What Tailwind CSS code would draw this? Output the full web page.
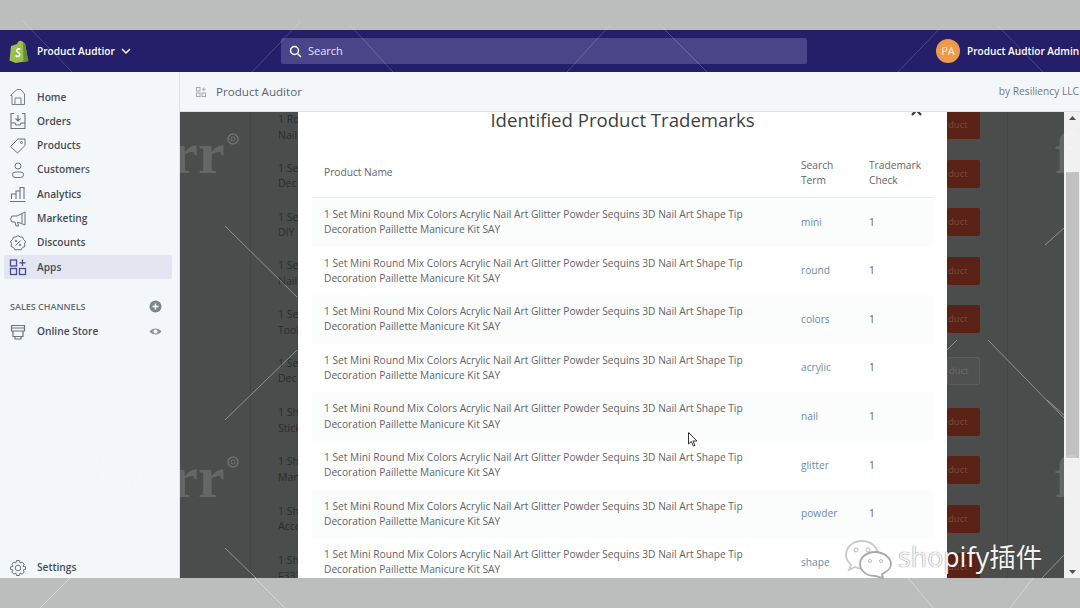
<!doctype html>
<html><head><meta charset="utf-8">
<script src="https://cdn.jsdelivr.net/npm/@tailwindcss/browser@4"></script>
</head>
<body class="relative w-[1080px] h-[608px] overflow-hidden bg-[#bcbdbd] font-['Open_Sans','Noto_Sans_CJK_SC',sans-serif] antialiased">
<div class="h-[30px]"></div>
<div class="h-[548px] flex flex-col bg-[#f4f6f8]">
  <header class="h-[42px] shrink-0 bg-[#241f68] flex items-center text-white relative">
    <div class="w-[281px] flex items-center pl-[9px] shrink-0">
      <svg width="20" height="23" viewBox="0 0 20 23"><path d="M2 6 L8 4 C9 1 11 0 12.500 1 L14 2 L16 3.500 L19 21 L6.500 23 L0.500 20.500Z" fill="#9ac04a"/><path d="M14 2 L16 3.500 L19.500 21 L14.500 22.500Z" fill="#5e8e3e"/><path d="M11.500 8.500c-2.200-1-4.500 0-4.500 2 0 2.200 3 2.400 3 4 0 1.100-1.600 1.300-3.200.3l-.5 2c2.200 1.100 5.200.5 5.200-2.200 0-2.400-3-2.700-3-4 0-.9 1.100-1.100 2.600-.4z" fill="#fff"/></svg>
      <span class="ml-[8px] pt-[1px] text-[10.100px] font-semibold">Product Audtior</span>
      <svg class="ml-[6px] mt-[1px]" width="10" height="7" viewBox="0 0 10 7"><path d="M1 1l4 4 4-4" fill="none" stroke="#fff" stroke-width="1.500"/></svg>
    </div>
    <div class="w-[526px] h-[26px] bg-[#4a4488] rounded-[2px] flex items-center pl-[8px] shrink-0">
      <svg width="13" height="13" viewBox="0 0 13 13"><circle cx="5.500" cy="5.500" r="4" fill="none" stroke="#fff" stroke-width="1.400"/><path d="M8.500 8.500l3.500 3.500" stroke="#fff" stroke-width="1.500"/></svg>
      <span class="ml-[6px] text-[11px] text-[#e6e5f0]">Search</span>
    </div>
    <div class="ml-[129px] w-[24px] h-[24px] rounded-full bg-[#ee9a4d] flex items-center justify-center text-[11px] text-[#fdeedd] shrink-0">PA</div>
    <span class="ml-[7px] pt-[1px] text-[10.100px] font-semibold whitespace-nowrap">Product Audtior Admin</span>
  </header>
  <div class="flex-1 flex min-h-0">
    <aside class="w-[180px] shrink-0 flex flex-col bg-[#f4f7f9] text-[#454b58] text-[10.200px] font-semibold pt-[13px] border-r border-[#dfe3e8]">
      <nav class="flex flex-col">
        <a class="h-[24.300px] flex items-center pl-[37px] relative"><svg class="absolute left-[9px]" width="18" height="18" viewBox="0 0 18 18" fill="none" stroke="#7a808c"><path d="M8 1.500 L1.500 7.500 H3 V16.500 H15.500 V6 L12 1.500Z M6 16.500 V10 H12 V16.500"/></svg>Home</a>
        <a class="h-[24.300px] flex items-center pl-[37px] relative"><svg class="absolute left-[9px]" width="18" height="18" viewBox="0 0 18 18" fill="none" stroke="#6b7280"><path d="M5 1.500H2V16.500H16V1.500H13M2 11H6L7 13H11L12 11H16M9 3V9M6.500 6.500L9 9L11.500 6.500" stroke-width="1.100"/></svg>Orders</a>
        <a class="h-[24.300px] flex items-center pl-[37px] relative"><svg class="absolute left-[9px]" width="18" height="18" viewBox="0 0 18 18" fill="none" stroke="#6b7280"><path d="M1.500 9.500L9 2H16V8.500L8.500 16Z"/><circle cx="12.500" cy="5.500" r="1"/></svg>Products</a>
        <a class="h-[24.300px] flex items-center pl-[37px] relative"><svg class="absolute left-[9px]" width="18" height="18" viewBox="0 0 18 18" fill="none" stroke="#6b7280"><circle cx="9" cy="5" r="3"/><rect x="3.500" y="11" width="11" height="5.500" rx="2.700"/></svg>Customers</a>
        <a class="h-[24.300px] flex items-center pl-[37px] relative"><svg class="absolute left-[9px]" width="18" height="18" viewBox="0 0 18 18" fill="none" stroke="#6b7280"><path d="M2.500 14V9H7V14M7 14V6H11V14M11 14V2.500H15V14M1 16.500H16.500" stroke-width="1.100"/></svg>Analytics</a>
        <a class="h-[24.300px] flex items-center pl-[37px] relative"><svg class="absolute left-[9px]" width="18" height="18" viewBox="0 0 18 18" fill="none" stroke="#6b7280"><path d="M16 2L8 6H3L1.500 9L3 12H6L7 16H9.500L8.500 12L16 15ZM13 4V13"/></svg>Marketing</a>
        <a class="h-[24.300px] flex items-center pl-[37px] relative"><svg class="absolute left-[9px]" width="18" height="18" viewBox="0 0 18 18" fill="none" stroke="#6b7280"><path d="M9 1.500L11 3L13.500 3L14.500 5.500L16.500 7.500L15.500 10L16 12.500L13.500 13.500L12 16L9 15.500L6 16L4.500 13.500L2 12.500L2.500 10L1.500 7.500L3.500 5.500L4.500 3L7 3Z"/><path d="M6.500 11.500L11.500 6.500" /><circle cx="7" cy="7" r=".8"/><circle cx="11" cy="11" r=".8"/></svg>Discounts</a>
        <a class="h-[24.300px] flex items-center pl-[33px] ml-[4px] mr-[7px] relative bg-[#e3e6f0] rounded-[2px]"><svg class="absolute left-[5px]" width="18" height="18" viewBox="0 0 18 18" fill="none" stroke="#454c96" stroke-width="1.300"><rect x="1.500" y="2" width="6" height="6"/><rect x="1.500" y="10.500" width="6" height="6"/><rect x="10.500" y="10.500" width="6" height="6"/><path d="M13.500 1.500V8M10.500 4.800H16.500"/></svg>Apps</a>
      </nav>
      <div class="mt-[15px] mb-[1px] h-[24px] flex items-center pl-[10px] pr-[17px] justify-between text-[9px] text-[#5f6776]">
        <span>SALES CHANNELS</span>
        <svg width="13" height="13" viewBox="0 0 13 13"><circle cx="6.500" cy="6.500" r="6" fill="#7d8493"/><path d="M6.500 3.500v6M3.500 6.500h6" stroke="#fff" stroke-width="1.500"/></svg>
      </div>
      <a class="h-[24.300px] flex items-center pl-[37px] pr-[17px] relative"><svg class="absolute left-[9px]" width="18" height="18" viewBox="0 0 18 18" fill="none" stroke="#6b7280"><path d="M2.500 2.500H15.500V8H2.500ZM2.500 5H15.500M4 8V13.500H14V8M6 13.500V16H12V13.500" stroke-width="1.200"/></svg><span class="flex-1">Online Store</span><svg width="13" height="9" viewBox="0 0 13 9"><path d="M.500 4.500C3 .5 10 .5 12.500 4.500 10 8.500 3 8.500.500 4.500Z" fill="#8d939f"/><circle cx="6.500" cy="4.500" r="2" fill="#fff"/></svg></a>
      <a class="mt-auto h-[20px] flex items-center pl-[37px] relative"><svg class="absolute left-[9px]" width="18" height="18" viewBox="0 0 18 18" fill="none" stroke="#6b7280"><circle cx="9" cy="9" r="2.800"/><path d="M7.500 1.500H10.500L11 4L13.200 3L15.200 5.200L14 7.300L16.500 8V10.500L14 11L15.200 13L13.200 15.200L11 14L10.500 16.500H7.500L7 14L4.800 15.200L2.800 13L4 11L1.500 10.500V8L4 7.300L2.800 5.200L4.800 3L7 4Z"/></svg>Settings</a>
    </aside>
    <div class="flex-1 flex flex-col min-w-0">
      <div class="h-[40px] shrink-0 bg-[#f4f7f9] border-b border-[#dfe3e8] flex items-center pt-[1px] pl-[16px] pr-[1px]">
        <svg width="10" height="10" viewBox="0 0 10 10" fill="none" stroke="#a3a9b3"><rect x=".5" y=".5" width="3.500" height="3.500"/><rect x=".5" y="6" width="3.500" height="3.500"/><rect x="6" y="6" width="3.500" height="3.500"/><path d="M7.700.5V4M6 2.300H9.500"/></svg>
        <span class="ml-[10px] text-[11.600px] text-[#5b6270]">Product Auditor</span>
        <span class="ml-auto text-[10.200px] text-[#707782]">by Resiliency LLC</span>
      </div>
      <div class="flex-1 relative bg-[#4b4c4c] flex min-h-0 overflow-hidden">
        <div class="flex-1 relative min-w-0">
          <div class="absolute left-[70px] top-0 bottom-0 w-px bg-[#444545]"></div>
          <div class="absolute left-[827px] top-0 bottom-0 w-px bg-[#444545]"></div>
          <div class="absolute left-[98px] top-0 w-[20px] flex flex-col text-[10.500px] leading-[15.500px] text-[#2b2c2c] overflow-hidden whitespace-nowrap">
            <div class="h-[48.800px]">1 Ro<br>Nail</div><div class="h-[48.800px]">1 Se<br>Dec</div><div class="h-[48.800px]">1 Se<br>DIY</div><div class="h-[48.800px]">1 Se<br>Nail</div><div class="h-[48.800px]">1 Se<br>Tool</div><div class="h-[49.500px]">1 Se<br>Dec</div><div class="h-[48.800px]">1 Sh<br>Stick</div><div class="h-[49.500px]">1 Sh<br>Man</div><div class="h-[49.500px]">1 Sh<br>Acce</div><div class="h-[48.800px]">1 Sh<br>F333</div>
          </div>
          <div class="absolute left-[767px] top-[-1px] w-[33px] flex flex-col items-start gap-[20.600px]">
            <div class="h-[28px] w-[33px] bg-[#5a2216] rounded-[2px] text-[9.500px] leading-[28px] text-[#7d4a3c] pl-[1px]">duct</div>
            <div class="h-[28px] w-[33px] bg-[#5a2216] rounded-[2px] text-[9.500px] leading-[28px] text-[#7d4a3c] pl-[1px]">duct</div>
            <div class="h-[28px] w-[33px] bg-[#5a2216] rounded-[2px] text-[9.500px] leading-[28px] text-[#7d4a3c] pl-[1px]">duct</div>
            <div class="h-[28px] w-[33px] bg-[#5a2216] rounded-[2px] text-[9.500px] leading-[28px] text-[#7d4a3c] pl-[1px]">duct</div>
            <div class="h-[28px] w-[33px] bg-[#5a2216] rounded-[2px] text-[9.500px] leading-[28px] text-[#7d4a3c] pl-[1px]">duct</div>
            <div class="h-[28px] w-[33px] mt-[3px] bg-[#4f5050] border border-[#5a5b5b] rounded-[2px] text-[9.500px] leading-[26px] text-[#6c6d6d] pl-[1px]">duct</div>
            <div class="h-[28px] w-[33px] mt-[2px] bg-[#5a2216] rounded-[2px] text-[9.500px] leading-[28px] text-[#7d4a3c] pl-[1px]">duct</div>
            <div class="h-[28px] w-[33px] bg-[#5a2216] rounded-[2px] text-[9.500px] leading-[28px] text-[#7d4a3c] pl-[1px]">duct</div>
            <div class="h-[28px] w-[33px] bg-[#5a2216] rounded-[2px] text-[9.500px] leading-[28px] text-[#7d4a3c] pl-[1px]">duct</div>
            <div class="h-[28px] w-[33px] bg-[#5a2216] rounded-[2px] text-[9.500px] leading-[28px] text-[#7d4a3c] pl-[1px]">duct</div>
          </div>
          <!-- modal -->
          <div class="absolute left-[118px] top-0 bottom-0 w-[649px] bg-white overflow-hidden text-[#5f6469] text-[10.200px]">
            <div class="h-[83px] relative">
              <div class="text-center text-[18.600px] leading-[26px] -mt-[5px] text-[#3c3f44]">Identified Product Trademarks</div>
              <svg class="absolute right-[25px] top-0" width="11" height="9" viewBox="0 0 11 9"><path d="M1 -2L10 8M10 -2L1 8" stroke="#33363a" stroke-width="2.200"/></svg>
            </div>
            <div class="mx-[14px]">
              <div class="flex items-center h-[45px] -mt-[37px] pb-[5px] border-b border-[#e7e9ea] pl-[12px]">
                <div class="w-[477px]">Product Name</div>
                <div class="w-[68px] leading-[15px]">Search<br>Term</div>
                <div class="leading-[15px]">Trademark<br>Check</div>
              </div>
              <div class="flex flex-col">
                <div class="h-[48.600px] bg-[#fbfcfc] flex items-center pl-[12px]"><div class="w-[477px] leading-[15.300px]">1 Set Mini Round Mix Colors Acrylic Nail Art Glitter Powder Sequins 3D Nail Art Shape Tip<br>Decoration Paillette Manicure Kit SAY</div><div class="w-[68px] text-[#6b8aa5]">mini</div><div>1</div></div>
                <div class="h-[48.600px] flex items-center pl-[12px]"><div class="w-[477px] leading-[15.300px]">1 Set Mini Round Mix Colors Acrylic Nail Art Glitter Powder Sequins 3D Nail Art Shape Tip<br>Decoration Paillette Manicure Kit SAY</div><div class="w-[68px] text-[#6b8aa5]">round</div><div>1</div></div>
                <div class="h-[48.600px] bg-[#fbfcfc] flex items-center pl-[12px]"><div class="w-[477px] leading-[15.300px]">1 Set Mini Round Mix Colors Acrylic Nail Art Glitter Powder Sequins 3D Nail Art Shape Tip<br>Decoration Paillette Manicure Kit SAY</div><div class="w-[68px] text-[#6b8aa5]">colors</div><div>1</div></div>
                <div class="h-[48.600px] flex items-center pl-[12px]"><div class="w-[477px] leading-[15.300px]">1 Set Mini Round Mix Colors Acrylic Nail Art Glitter Powder Sequins 3D Nail Art Shape Tip<br>Decoration Paillette Manicure Kit SAY</div><div class="w-[68px] text-[#6b8aa5]">acrylic</div><div>1</div></div>
                <div class="h-[48.600px] bg-[#fbfcfc] flex items-center pl-[12px]"><div class="w-[477px] leading-[15.300px]">1 Set Mini Round Mix Colors Acrylic Nail Art Glitter Powder Sequins 3D Nail Art Shape Tip<br>Decoration Paillette Manicure Kit SAY</div><div class="w-[68px] text-[#6b8aa5]">nail</div><div>1</div></div>
                <div class="h-[48.600px] flex items-center pl-[12px]"><div class="w-[477px] leading-[15.300px]">1 Set Mini Round Mix Colors Acrylic Nail Art Glitter Powder Sequins 3D Nail Art Shape Tip<br>Decoration Paillette Manicure Kit SAY</div><div class="w-[68px] text-[#6b8aa5]">glitter</div><div>1</div></div>
                <div class="h-[48.600px] bg-[#fbfcfc] flex items-center pl-[12px]"><div class="w-[477px] leading-[15.300px]">1 Set Mini Round Mix Colors Acrylic Nail Art Glitter Powder Sequins 3D Nail Art Shape Tip<br>Decoration Paillette Manicure Kit SAY</div><div class="w-[68px] text-[#6b8aa5]">powder</div><div>1</div></div>
                <div class="h-[48.600px] flex items-center pl-[12px]"><div class="w-[477px] leading-[15.300px]">1 Set Mini Round Mix Colors Acrylic Nail Art Glitter Powder Sequins 3D Nail Art Shape Tip<br>Decoration Paillette Manicure Kit SAY</div><div class="w-[68px] text-[#6b8aa5]">shape</div><div>1</div></div>
              </div>
            </div>
          </div>
        </div>
        <div class="w-[16px] shrink-0 bg-[#f1f1f1] flex flex-col items-center justify-between py-[4px] relative">
          <svg width="7" height="4" viewBox="0 0 7 4"><path d="M3.500 0L7 4H0Z" fill="#505050"/></svg>
          <div class="absolute top-[60px] left-[2px] right-[1px] h-[286px] bg-[#c1c1c1]"></div>
          <svg width="7" height="4" viewBox="0 0 7 4"><path d="M3.500 4L7 0H0Z" fill="#505050"/></svg>
        </div>
      </div>
    </div>
  </div>
</div>
<!-- watermark overlay -->
<div class="absolute inset-0 pointer-events-none overflow-hidden">
  <div class="absolute left-[78px] top-[116px] text-[60px] leading-[74px] font-bold font-['Liberation_Serif',serif] text-white/15">fiverr</div>
  <div class="absolute left-[78px] top-[440px] text-[60px] leading-[74px] font-bold font-['Liberation_Serif',serif] text-white/15">fiverr</div>
  <div class="absolute left-[1055px] top-[116px] text-[60px] leading-[74px] font-bold font-['Liberation_Serif',serif] text-white/15">f</div>
  <div class="absolute left-[1055px] top-[440px] text-[60px] leading-[74px] font-bold font-['Liberation_Serif',serif] text-white/15">f</div>
  <svg class="absolute inset-0" width="1080" height="608" fill="none" stroke="#fff">
    <circle cx="233" cy="139" r="5" stroke-opacity=".2" stroke-width="1.500"/><circle cx="233" cy="139" r="2" stroke-opacity=".2"/>
    <circle cx="233" cy="462" r="5" stroke-opacity=".2" stroke-width="1.500"/><circle cx="233" cy="462" r="2" stroke-opacity=".2"/>
    <path stroke-opacity=".18" d="M22 20L72 72M252 72L300 22M350 25L393 72M567 72L610 25M660 25L707 72M898 72L943 25M997 25L1043 72"/>
    <path stroke-opacity=".38" d="M225 226L297 297M225 420L297 350M225 548L256 578M40 608L70 578M255 578L285 608M908 578L933 608M1010 608L1033 578M988 340L1064 418M947 350L957 340M1047 400L1064 415M1064 555L1042 578M1045 245L1064 228"/>
  </svg>
  <svg class="absolute left-[688px] top-[432px]" width="11" height="15" viewBox="0 0 11 15"><path d="M.5.5V12L3.300 9.500L5.300 14L7 13.300L5 9H9Z" fill="#fff" stroke="#333"/></svg>
  <svg class="absolute left-[845px] top-[539px]" width="50" height="40" viewBox="0 0 50 40" fill="#fff" stroke="#fff"><path d="M17 2C8 2 1 8 1 16C1 20 3 23 6 26L4 31L10 28C14 30 20 30 24 28C30 26 33 20 33 15C32 7 25 2 17 2Z" stroke="#c9c9c9" stroke-width="1.800"/><path d="M30 13C21 13 15 19 15 25C15 32 22 37 30 37L38 39L37 35C42 33 46 29 46 25C46 19 39 13 30 13Z" stroke="#a8a8a8" stroke-width="1.800"/><circle cx="11" cy="11" r="2" stroke="#bbb"/><circle cx="23" cy="11" r="2" stroke="#bbb"/><circle cx="25" cy="22" r="1.500" stroke="#bbb"/><circle cx="36" cy="22" r="1.500" stroke="#bbb"/></svg>
  <div class="absolute left-[898px] top-[538px] text-[26.600px] leading-[38px] text-[#f2f2f2] [text-shadow:0_0_1px_rgba(0,0,0,0.65)] font-['Noto_Sans','Noto_Sans_CJK_SC',sans-serif] whitespace-nowrap">shopify插件</div>
</div>
</body></html>
